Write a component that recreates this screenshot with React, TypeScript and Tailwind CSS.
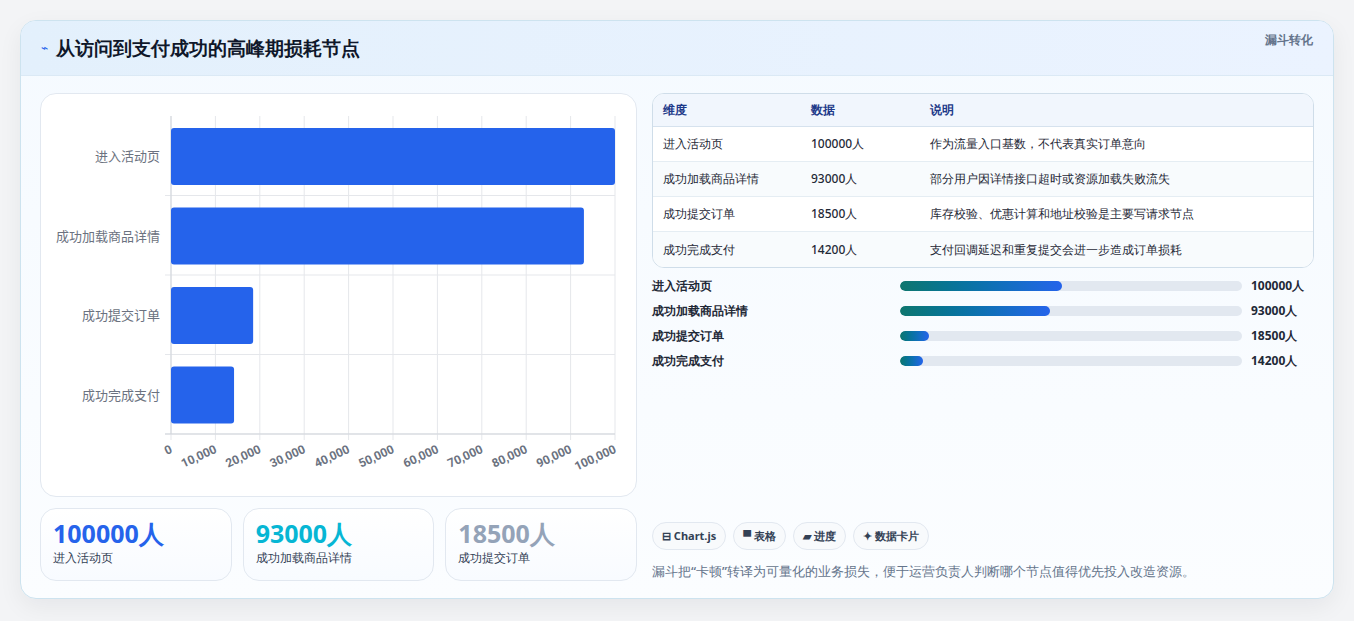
import React from "react";

const rows = [
  { name: "进入活动页", v: 100000, note: "作为流量入口基数，不代表真实订单意向", pct: 47.4 },
  { name: "成功加载商品详情", v: 93000, note: "部分用户因详情接口超时或资源加载失败流失", pct: 43.9 },
  { name: "成功提交订单", v: 18500, note: "库存校验、优惠计算和地址校验是主要写请求节点", pct: 8.5 },
  { name: "成功完成支付", v: 14200, note: "支付回调延迟和重复提交会进一步造成订单损耗", pct: 6.7 },
];

function Chart() {
  const L = 130, T = 22, W = 444, H = 318;
  const rowH = H / 4;
  return (
    <svg width="597" height="403" className="block">
      {Array.from({ length: 11 }).map((_, i) => (
        <line key={i} x1={L + (W / 10) * i} x2={L + (W / 10) * i} y1={T} y2={T + H + 6} stroke="#e5e7eb" />
      ))}
      {[0, 1, 2, 3].map((i) => (
        <line key={i} x1={L - 6} x2={L + W} y1={T + rowH * (i + 1)} y2={T + rowH * (i + 1)} stroke="#e5e7eb" />
      ))}
      <line x1={L - 6} x2={L + W} y1={T + H} y2={T + H} stroke="#d1d5db" />
      <line x1={L} x2={L} y1={T} y2={T + H} stroke="#d1d5db" />
      {rows.map((r, i) => {
        const y = T + rowH * i + 12;
        return (
          <g key={i}>
            <rect x={L} y={y} width={(r.v / 100000) * W} height={57} rx={3} fill="#2563eb" />
            <text x={L - 11} y={y + 33} textAnchor="end" fontSize="13" fill="#6b7280" fontFamily="'Noto Sans CJK SC', sans-serif">{r.name}</text>
          </g>
        );
      })}
      {Array.from({ length: 11 }).map((_, i) => {
        const x = L + (W / 10) * i;
        return (
          <text key={i} x={x + 2} y={T + H + 18} textAnchor="end" fontSize="12" fontWeight="700" fill="#6b7280" fontFamily="Roboto, sans-serif" transform={`rotate(-25 ${x + 2} ${T + H + 18})`}>
            {i === 0 ? "0" : (i * 10000).toLocaleString("en-US")}
          </text>
        );
      })}
    </svg>
  );
}

export default function App() {
  return (
    <div className="w-[1354px] h-[621px] bg-[#f3f4f6] pt-[20px] pl-[20px] font-['Noto_Sans_CJK_SC',sans-serif]">
      <div className="w-[1314px] h-[579px] rounded-2xl border border-[#cde3ef] bg-gradient-to-b from-[#f5faff] to-[#fbfdff] overflow-hidden shadow-[0_8px_24px_rgba(15,23,42,0.06)]">
        <div className="h-[55px] flex items-center justify-between px-5 bg-gradient-to-r from-[#e3f0fc] to-[#ebf3ff] border-b border-[#dbe9f5]">
          <div className="flex items-center gap-2">
            <span className="text-[#2563eb] text-xs">⌁</span>
            <h1 className="text-[19px] font-bold text-[#0f172a]">从访问到支付成功的高峰期损耗节点</h1>
          </div>
          <span className="text-xs font-bold text-[#64748b] -mt-4">漏斗转化</span>
        </div>
        <div className="flex gap-[15px] px-[19px] pt-[17px]">
          <div className="w-[597px] flex flex-col gap-[11px]">
            <div className="h-[404px] rounded-2xl border border-[#e2e8f0] bg-white overflow-hidden">
              <Chart />
            </div>
            <div className="flex gap-[11px]">
              {[
                { v: "100000人", c: "text-[#2563eb]", l: "进入活动页" },
                { v: "93000人", c: "text-[#06b6d4]", l: "成功加载商品详情" },
                { v: "18500人", c: "text-[#94a3b8]", l: "成功提交订单" },
              ].map((s) => (
                <div key={s.l} className="w-[192px] h-[73px] rounded-2xl border border-[#e2e8f0] bg-gradient-to-b from-white to-[#f8fbff] px-3 pt-[9px]">
                  <div className={`text-[25px] leading-[30px] font-bold ${s.c}`}>{s.v}</div>
                  <div className="text-xs text-[#334155] mt-[2px]">{s.l}</div>
                </div>
              ))}
            </div>
          </div>
          <div className="w-[662px] flex flex-col">
            <div className="rounded-xl border border-[#cfdde9] overflow-hidden bg-white text-xs">
              <div className="flex h-[33px] items-center bg-[#f1f6fd] border-b border-[#d6e2ee] font-bold text-[#1e3a8a]">
                <div className="w-[158px] pl-[10px]">维度</div>
                <div className="w-[119px]">数据</div>
                <div>说明</div>
              </div>
              {rows.map((r, i) => (
                <div key={r.name} className={`flex h-[35px] items-center text-[#1f2937] font-medium ${i % 2 ? "bg-[#f8fbfd]" : "bg-white"} ${i < 3 ? "border-b border-[#e5edf3]" : ""}`}>
                  <div className="w-[158px] pl-[10px]">{r.name}</div>
                  <div className="w-[119px]">{r.v}人</div>
                  <div>{r.note}</div>
                </div>
              ))}
            </div>
            <div className="flex flex-col gap-[9px] mt-[10px]">
              {rows.map((r) => (
                <div key={r.name} className="flex items-center h-[16px] text-xs font-bold text-[#1f2937]">
                  <div className="w-[248px]">{r.name}</div>
                  <div className="w-[342px] h-[10px] rounded-full bg-[#e2e8f0] overflow-hidden">
                    <div className="h-full rounded-full bg-gradient-to-r from-[#0f766e] to-[#2563eb]" style={{ width: `${r.pct}%` }} />
                  </div>
                  <div className="ml-[9px]">{r.v}人</div>
                </div>
              ))}
            </div>
            <div className="flex gap-[7px] mt-[153px]">
              {["⊟ Chart.js", "▀ 表格", "▰ 进度", "✦ 数据卡片"].map((c) => (
                <span key={c} className="h-[28px] px-[9px] flex items-center rounded-full border border-[#e2e8f0] bg-[#f8fafc] text-[11px] font-bold text-[#334155]">{c}</span>
              ))}
            </div>
            <p className="mt-[12px] text-[13px] font-medium text-[#64748b]">漏斗把“卡顿”转译为可量化的业务损失，便于运营负责人判断哪个节点值得优先投入改造资源。</p>
          </div>
        </div>
      </div>
    </div>
  );
}
